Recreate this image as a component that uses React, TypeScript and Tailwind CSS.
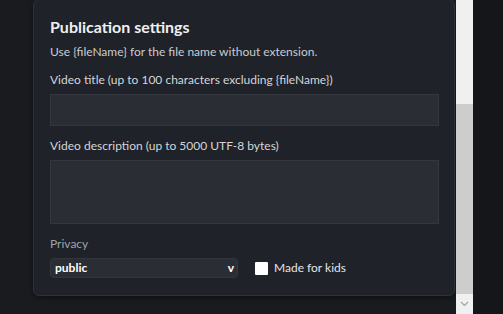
import React from 'react';

const font = { fontFamily: 'Lato, "Noto Sans", sans-serif' };

const Field = ({ label, tall }: { label: string; tall?: boolean }) => (
  <div className="flex flex-col">
    <label className="text-[12px] leading-[16px] text-[#d4d6da]">{label}</label>
    <div
      className={`mt-[6px] w-[389px] border border-[#34373e] bg-[#2a2d34] ${tall ? 'h-[64px]' : 'h-[32px]'}`}
    />
  </div>
);

export default function App() {
  return (
    <div className="flex h-[314px] w-[503px] overflow-hidden bg-[#1a1b1e]" style={font}>
      <div className="w-[33px] shrink-0" />
      <div className="flex w-[422px] shrink-0 flex-col">
        <div className="-mt-[1px] flex h-[297px] flex-col rounded-[6px] border border-[#2e3138] bg-[#1f2228] px-[16px] pt-[17px] shadow-[0_2px_4px_rgba(0,0,0,0.4)]">
          <h2 className="text-[16px] font-bold leading-[20px] text-[#eef0f2]">Publication settings</h2>
          <p className="mt-[7px] text-[12px] leading-[16px] text-[#c9ccd1]">
            Use {'{fileName}'} for the file name without extension.
          </p>
          <div className="mt-[12px] flex flex-col gap-[12px]">
            <Field label="Video title (up to 100 characters excluding {fileName})" />
            <Field label="Video description (up to 5000 UTF-8 bytes)" tall />
          </div>
          <label className="mt-[12px] text-[12px] leading-[16px] text-[#9ea2a9]">Privacy</label>
          <div className="mt-[6px] flex items-center gap-[17px]">
            <div className="flex h-[20px] w-[188px] items-center justify-between rounded-[4px] border border-[#33363d] bg-[#2a2d34] pl-[4px] pr-[3px]">
              <span className="text-[12px] font-bold text-white">public</span>
              <span className="text-[12px] font-bold text-white">v</span>
            </div>
            <div className="flex items-center gap-[6px]">
              <div className="h-[13px] w-[13px] rounded-[1px] bg-white" />
              <span className="text-[12px] text-[#e3e5e8]">Made for kids</span>
            </div>
          </div>
        </div>
      </div>
      <div className="w-[1px] shrink-0" />
      <div className="flex w-[17px] shrink-0 flex-col bg-[#f0f0f0]">
        <div className="h-[104px]" />
        <div className="h-[190px] bg-[#cdcdcd]" />
        <div className="flex h-[20px] items-center justify-center">
          <svg width="9" height="6" viewBox="0 0 9 6" fill="none">
            <path d="M1 1l3.5 3.5L8 1" stroke="#a3a3a3" strokeWidth="1.2" />
          </svg>
        </div>
      </div>
      <div className="flex-1 bg-[#151619]" />
    </div>
  );
}
